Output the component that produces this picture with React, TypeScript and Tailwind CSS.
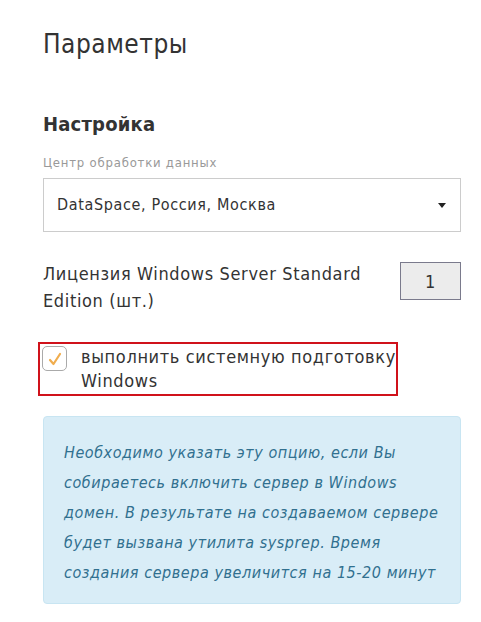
import { useState } from "react";

export default function App() {
  const [sysprep, setSysprep] = useState(true);
  const [licenses, setLicenses] = useState("1");

  return (
    <main className="min-h-screen bg-white pr-[20px] pl-[43px] pt-[26px] font-['DejaVu_Sans_Condensed','DejaVu_Sans',sans-serif] tracking-[0.04em] text-[#333]">
      <h1 className="text-[26px] leading-[36px] font-normal tracking-[0.02em]">Параметры</h1>

      <h2 className="mt-[48px] text-[20px] leading-[28px] font-bold tracking-[0.01em]">Настройка</h2>

      <p className="mt-[16px] text-[13px] leading-[18px] tracking-[0.06em] text-[#999]">Центр обработки данных</p>
      <div className="mt-[6px] flex h-[54px] items-center justify-between border border-[#ccc] pr-[14px] pl-[13px]">
        <span className="text-[16px]">DataSpace, Россия, Москва</span>
        <span className="h-0 w-0 border-t-[5px] border-r-[4px] border-l-[4px] border-t-[#222] border-r-transparent border-l-transparent" />
      </div>

      <div className="mt-[28px] flex items-start justify-between">
        <p className="text-[18px] leading-[27px]">
          Лицензия Windows Server Standard
          <br />
          Edition (шт.)
        </p>
        <input
          value={licenses}
          onChange={(e) => setLicenses(e.target.value)}
          className="mt-[2px] h-[38px] w-[61px] border border-[#7a7a8c] bg-[#ececec] text-center text-[18px] text-[#333] outline-none"
        />
      </div>

      <label className="mt-[28px] -ml-[5px] flex w-[360px] cursor-pointer items-start gap-[14px] border-2 border-[#d0121b] pl-[2px] pt-[1px] pb-[1px]">
        <button
          type="button"
          onClick={() => setSysprep(!sysprep)}
          className="mt-[1px] flex h-[25px] w-[25px] shrink-0 items-center justify-center rounded-[5px] border border-[#aaa] bg-white"
        >
          {sysprep && (
            <svg width="16" height="16" viewBox="0 0 16 16" fill="none">
              <path d="M3 9 L6.5 13 L13 3" stroke="#f0ad4e" strokeWidth="2.2" strokeLinecap="round" strokeLinejoin="round" />
            </svg>
          )}
        </button>
        <span className="text-[18px] leading-[24px]">
          выполнить системную подготовку
          <br />
          Windows
        </span>
      </label>

      <div className="mt-[20px] rounded-[4px] border border-[#c8e5f2] bg-[#d9edf7] px-[20px] pt-[21px] pb-[15px]">
        <p className="text-[16px] leading-[30px] tracking-[0.035em] whitespace-nowrap text-[#31708f] italic">
          Необходимо указать эту опцию, если Вы
          <br />
          собираетесь включить сервер в Windows
          <br />
          домен. В результате на создаваемом сервере
          <br />
          будет вызвана утилита sysprep. Время
          <br />
          создания сервера увеличится на 15-20 минут
        </p>
      </div>
    </main>
  );
}
